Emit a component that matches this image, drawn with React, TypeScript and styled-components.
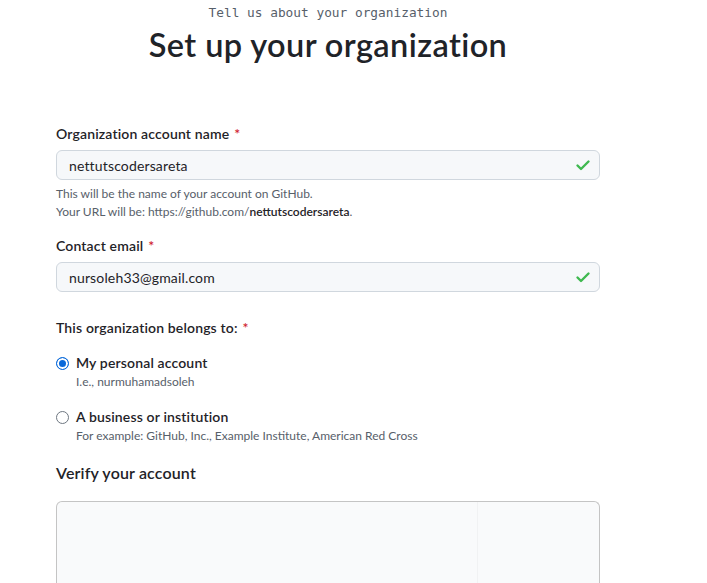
import React from "react";
import styled, { createGlobalStyle } from "styled-components";

const Global = createGlobalStyle`
  html, body { margin: 0; padding: 0; background: #ffffff; }
  body { font-family: Lato, "Segoe UI", sans-serif; color: #1f2328; }
  * { box-sizing: border-box; }
`;

const Page = styled.div`
  width: 544px;
  margin-left: 56px;
  display: flex;
  flex-direction: column;
`;

const Header = styled.header`
  display: flex;
  flex-direction: column;
  align-items: center;
  padding-top: 4px;
  margin-bottom: 59px;
`;

const Eyebrow = styled.p`
  margin: 0;
  font-family: "DejaVu Sans Mono", "Liberation Mono", monospace;
  font-size: 12.8px;
  line-height: 17px;
  color: #57606a;
`;

const Title = styled.h1`
  margin: 4px 0 0;
  font-size: 32.5px;
  font-weight: 600;
  line-height: 40px;
  letter-spacing: 0.4px;
  color: #1f2328;
`;

const Field = styled.div<{ $mb: number }>`
  display: flex;
  flex-direction: column;
  margin-bottom: ${(p) => p.$mb}px;
`;

const Label = styled.label`
  font-size: 14px;
  font-weight: 600;
  line-height: 20px;
  letter-spacing: 0.15px;
  margin-bottom: 6px;
  color: #1f2328;
`;

const Req = styled.span`
  color: #cf222e;
  margin-left: 5px;
`;

const InputWrap = styled.div`
  position: relative;
  height: 30px;
  border: 1px solid #d0d7de;
  border-radius: 6px;
  background: #f6f8fa;
  display: flex;
  align-items: center;
  padding: 0 12px;
  font-size: 14px;
  letter-spacing: 0.15px;
  color: #1f2328;
`;

const Check = styled.svg`
  position: absolute;
  right: 8px;
  top: 6px;
`;

const Note = styled.p`
  margin: 5px 0 0;
  font-size: 12px;
  line-height: 18px;
  color: #57606a;
  b { color: #1f2328; font-weight: 600; }
`;

const Option = styled.label<{ $mb: number }>`
  display: grid;
  grid-template-columns: 13px 1fr;
  column-gap: 7px;
  align-items: center;
  margin-bottom: ${(p) => p.$mb}px;
`;

const Radio = styled.span<{ $on?: boolean }>`
  width: 13px;
  height: 13px;
  border-radius: 50%;
  border: 1px solid ${(p) => (p.$on ? "#0969da" : "#6e7781")};
  background: ${(p) => (p.$on ? "#0969da" : "#ffffff")};
  box-shadow: ${(p) => (p.$on ? "inset 0 0 0 2px #ffffff" : "none")};
`;

const OptTitle = styled.span`
  font-size: 14px;
  font-weight: 600;
  line-height: 20px;
  letter-spacing: 0.15px;
`;

const OptNote = styled.span`
  grid-column: 2;
  font-size: 12px;
  line-height: 18px;
  color: #57606a;
`;

const Section = styled.h2`
  margin: 0 0 16px;
  font-size: 16px;
  font-weight: 600;
  line-height: 24px;
  letter-spacing: 0.15px;
  color: #1f2328;
`;

const VerifyBox = styled.div`
  height: 120px;
  border: 1px solid #c4c4c4;
  border-bottom: none;
  border-radius: 6px 6px 0 0;
  background: #f9fafb;
  display: grid;
  grid-template-columns: 421px 1fr;
`;

const Divider = styled.div`
  border-right: 1px solid #f1f2f3;
`;

const CheckIcon = () => (
  <Check width="16" height="16" viewBox="0 0 16 16">
    <path
      d="M2.5 8.5 L6 12 L13.5 4.5"
      fill="none"
      stroke="#3fb950"
      strokeWidth="2.4"
      strokeLinecap="round"
      strokeLinejoin="round"
    />
  </Check>
);

export default function App() {
  return (
    <>
      <Global />
      <Page>
        <Header>
          <Eyebrow>Tell us about your organization</Eyebrow>
          <Title>Set up your organization</Title>
        </Header>

        <Field $mb={15}>
          <Label>
            Organization account name<Req>*</Req>
          </Label>
          <InputWrap>
            nettutscodersareta
            <CheckIcon />
          </InputWrap>
          <Note>
            This will be the name of your account on GitHub.
            <br />
            Your URL will be: https://github.com/<b>nettutscodersareta</b>.
          </Note>
        </Field>

        <Field $mb={26}>
          <Label>
            Contact email<Req>*</Req>
          </Label>
          <InputWrap>
            nursoleh33@gmail.com
            <CheckIcon />
          </InputWrap>
        </Field>

        <Field $mb={9}>
          <Label>
            This organization belongs to:<Req>*</Req>
          </Label>
        </Field>

        <Option $mb={16}>
          <Radio $on />
          <OptTitle>My personal account</OptTitle>
          <OptNote>I.e., nurmuhamadsoleh</OptNote>
        </Option>

        <Option $mb={16}>
          <Radio />
          <OptTitle>A business or institution</OptTitle>
          <OptNote>For example: GitHub, Inc., Example Institute, American Red Cross</OptNote>
        </Option>

        <Section>Verify your account</Section>
        <VerifyBox>
          <Divider />
          <div />
        </VerifyBox>
      </Page>
    </>
  );
}
